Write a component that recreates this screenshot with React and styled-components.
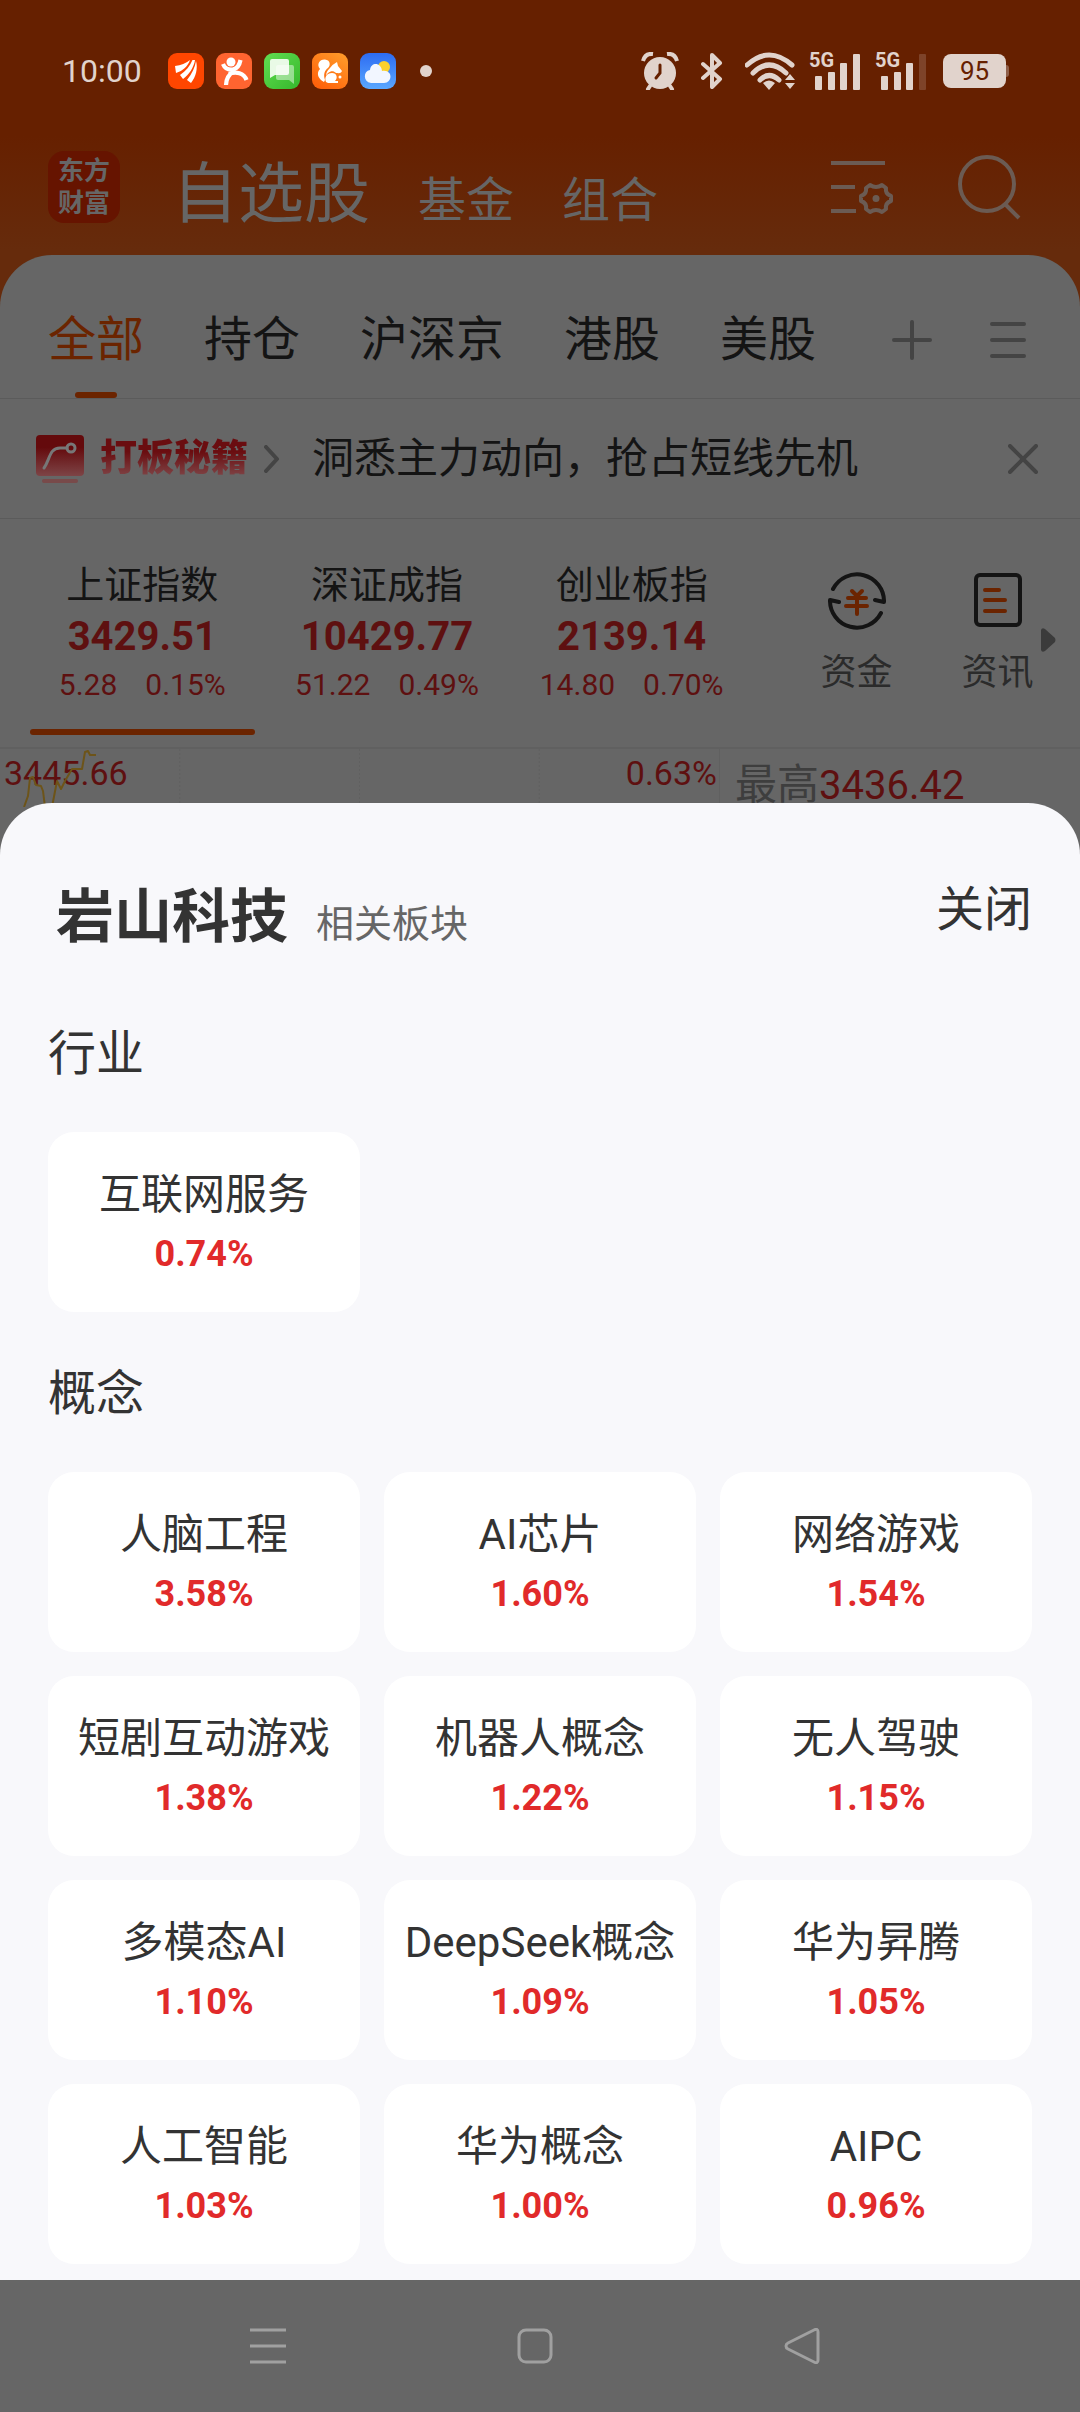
import React from "react";
import styled, { createGlobalStyle } from "styled-components";

const color = {
  scrim: "#666666",
  cream: "#e1d3cc",
  brand: "#662000",
  ink: "#141414",
  dimRed: "#5e1010",
  line: "#5b5b5b",
  icon: "#444444",
  sheet: "#f8f8fb",
  text: "#333333",
  red: "#e12a2a",
};

const GlobalStyle = createGlobalStyle`
  *, *::before, *::after { box-sizing: border-box; }
  body {
    margin: 0;
    background: ${color.scrim};
    font-family: Roboto, "Noto Sans CJK SC", sans-serif;
  }
  h1, h2, p, ul { margin: 0; padding: 0; font-weight: 400; }
  ul { list-style: none; }
  button { margin: 0; padding: 0; border: 0; background: none; color: inherit; font: inherit; cursor: pointer; }
  svg { display: block; flex: none; }
`;

const Screen = styled.div`
  min-height: 100vh;
  display: flex;
  flex-direction: column;
  background: linear-gradient(${color.brand} 0, ${color.brand} 136px, #662b0c 250px);
`;

const StatusBar = styled.div`
  height: 142px;
  padding: 0 74px 0 62px;
  display: flex;
  align-items: center;
  justify-content: space-between;
  color: ${color.cream};
`;

const StatusGroup = styled.div`
  display: flex;
  align-items: center;
  gap: ${(p) => p.$gap}px;
`;

const Time = styled.time`
  width: 94px;
  font-size: 32px;
  line-height: 48px;
`;

const Dot = styled.span`
  width: 12px;
  height: 12px;
  margin-left: 12px;
  border-radius: 50%;
  background: ${color.cream};
`;

const Signal = styled.span`
  position: relative;
  display: block;
  width: 52px;
`;

const SignalLabel = styled.span`
  position: absolute;
  left: 0;
  top: -2px;
  font-size: 20px;
  line-height: 20px;
  font-weight: 700;
`;

const Battery = styled.span`
  position: relative;
  width: 63px;
  height: 34px;
  margin-left: 2px;
  border-radius: 8px;
  background: ${color.cream};
  color: ${color.brand};
  font-size: 26px;
  line-height: 34px;
  text-align: center;

  &::after {
    content: "";
    position: absolute;
    left: 100%;
    top: 11px;
    width: 3px;
    height: 12px;
    border-radius: 0 3px 3px 0;
    background: #8f5f4a;
  }
`;

const Header = styled.header`
  display: flex;
  align-items: center;
  padding: 9px 58px 32px 48px;
  color: ${color.scrim};
`;

const Logo = styled.div`
  width: 72px;
  height: 72px;
  display: grid;
  align-content: center;
  justify-content: center;
  border-radius: 16px;
  background: #661400;
  font-size: 26px;
  font-weight: 700;
  line-height: 32px;
`;

const HeaderNav = styled.nav`
  flex: 1;
  height: 72px;
  padding: 8px 0 0 52px;
  display: flex;
  align-items: baseline;
  gap: 48px;
`;

const NavButton = styled.button`
  font-size: ${(p) => (p.$main ? 66 : 48)}px;
  line-height: 72px;
`;

const HeaderTools = styled.div`
  display: flex;
  align-items: center;
  gap: 64px;
  color: #6b5b53;
`;

const Panel = styled.main`
  border-radius: 52px 52px 0 0;
  background: ${color.scrim};
  color: ${color.ink};
`;

const TabRow = styled.div`
  display: flex;
  align-items: center;
  justify-content: space-between;
  height: 144px;
  padding: 0 54px 0 48px;
  border-bottom: 1px solid ${color.line};
`;

const Tabs = styled.div`
  display: flex;
  gap: 60px;
`;

const Tab = styled.button`
  position: relative;
  height: 143px;
  padding-top: 26px;
  font-size: 48px;
  line-height: 116px;
  color: ${(p) => (p["aria-selected"] ? "#6b2400" : color.ink)};

  &::after {
    content: "";
    position: absolute;
    left: calc(50% - 21px);
    bottom: 0;
    width: 42px;
    height: 6px;
    border-radius: 3px;
    background: ${(p) => (p["aria-selected"] ? "#6b2400" : "transparent")};
  }
`;

const TabTools = styled.div`
  display: flex;
  gap: 58px;
  padding-top: 26px;
  color: ${color.icon};
`;

const NewsRow = styled.div`
  display: flex;
  align-items: center;
  height: 120px;
  padding: 0 42px 0 36px;
  border-bottom: 1px solid ${color.line};
  color: ${color.icon};
`;

const NewsBrand = styled.span`
  margin: 0 16px 0 16px;
  font-size: 37px;
  line-height: 48px;
  font-weight: 900;
  color: transparent;
  background: linear-gradient(#6a0d10 35%, #80484a 90%);
  background-clip: text;
`;

const NewsText = styled.a`
  flex: 1;
  margin-left: 32px;
  font-size: 42px;
  line-height: 60px;
  color: ${color.ink};
  text-decoration: none;
`;

const MarketRow = styled.div`
  position: relative;
  display: grid;
  grid-template-columns: repeat(3, 1fr) 314px;
  height: 228px;
  padding: 0 12px 0 20px;
`;

const IndexCard = styled.button`
  position: relative;
  display: flex;
  flex-direction: column;
  align-items: center;
  padding-top: 38px;

  &::after {
    content: "";
    position: absolute;
    left: 10px;
    right: 10px;
    top: 210px;
    height: 6px;
    border-radius: 3px;
    background: ${(p) => (p.$active ? "#6b2400" : "transparent")};
  }
`;

const IndexName = styled.span`
  font-size: 38px;
  line-height: 56px;
`;

const IndexValue = styled.span`
  font-size: 40px;
  line-height: 48px;
  font-weight: 700;
  color: ${color.dimRed};
`;

const IndexChange = styled.span`
  display: flex;
  gap: 28px;
  font-size: 30px;
  line-height: 48px;
  color: ${color.dimRed};
`;

const Shortcuts = styled.div`
  display: grid;
  grid-template-columns: 1fr 1fr;
  padding-left: 32px;
`;

const Shortcut = styled.button`
  display: flex;
  flex-direction: column;
  align-items: center;
  gap: 18px;
  padding-top: 52px;
  font-size: 36px;
  line-height: 48px;
  color: #2b2b2b;
`;

const More = styled.span`
  position: absolute;
  right: 24px;
  top: 108px;
`;

const ChartRow = styled.div`
  display: grid;
  grid-template-columns: 2fr 1fr;
  height: 116px;
  border-top: 2px solid #606060;
`;

const ChartPane = styled.div`
  position: relative;
  display: flex;
  justify-content: space-between;
  padding: 0 2px 0 4px;
  border-right: 1px solid #606060;
  font-size: 34px;
  line-height: 48px;
  color: ${color.dimRed};
`;

const ChartLine = styled.svg`
  position: absolute;
  left: 0;
  top: 0;
`;

const HighPane = styled.p`
  padding-left: 15px;
  font-size: 42px;
  line-height: 72px;
  color: #3e3e3e;
`;

const HighValue = styled.span`
  font-size: 40px;
  color: ${color.dimRed};
`;

const Sheet = styled.section`
  position: relative;
  flex: 1;
  margin-top: -60px;
  padding: 66px 48px 16px;
  border-radius: 52px 52px 0 0;
  background: ${color.sheet};
  color: ${color.text};
`;

const SheetHead = styled.div`
  display: flex;
  align-items: baseline;
  gap: 28px;
  padding-left: 8px;
`;

const SheetTitle = styled.h1`
  font-size: 58px;
  line-height: 96px;
  font-weight: 700;
`;

const SheetNote = styled.span`
  flex: 1;
  font-size: 38px;
  line-height: 48px;
  color: #666666;
`;

const CloseButton = styled.button`
  align-self: flex-start;
  font-size: 48px;
  line-height: 82px;
`;

const GroupTitle = styled.h2`
  padding: ${(p) => p.$top}px 0 48px;
  font-size: 48px;
  line-height: 60px;
`;

const CardGrid = styled.ul`
  display: grid;
  grid-template-columns: repeat(3, 1fr);
  gap: 24px;
`;

const Card = styled.button`
  display: flex;
  flex-direction: column;
  align-items: center;
  width: 100%;
  height: 180px;
  padding-top: 32px;
  border-radius: 26px;
  background: #ffffff;
`;

const CardName = styled.span`
  font-size: 42px;
  line-height: 62px;
`;

const CardChange = styled.span`
  font-size: 36px;
  line-height: 56px;
  font-weight: 700;
  color: ${color.red};
`;

const SystemNav = styled.nav`
  display: grid;
  grid-template-columns: repeat(3, 1fr);
  height: 132px;
  padding: 0 144px 0 134px;
  background: ${color.scrim};
`;

const SystemKey = styled.button`
  display: grid;
  place-items: center;
`;

const AppIcons = () => (
  <>
    <svg width="36" height="36" viewBox="0 0 36 36">
      <rect width="36" height="36" rx="9" fill="#ff4600" />
      <path fill="#fff" d="M7 13Q16 12 22 7C20 13 15 18 8 20ZM12 22C18 18 22 13 24.500 7L27 7C26 14 21 22 15 26ZM19 27C24 21 27 14 28 8 30 15 28 24 23 30Z" />
    </svg>
    <svg width="36" height="36" viewBox="0 0 36 36">
      <rect width="36" height="36" rx="9" fill="#ff6430" />
      <circle cx="15" cy="9" r="4.500" fill="#fff" />
      <path d="M7 11C9 16 13 17 17 16.500Q23 15 24.500 7M19 17C13 21 10 26 10 32M13 21C20 18 28 20 30.500 27" fill="none" stroke="#fff" strokeWidth="4.200" />
    </svg>
    <svg width="36" height="36" viewBox="0 0 36 36">
      <defs><linearGradient id="msg" x2="1" y2="1"><stop stopColor="#62dd51" /><stop offset="1" stopColor="#35b82c" /></linearGradient></defs>
      <rect width="36" height="36" rx="9" fill="url(#msg)" />
      <path d="M8 6H23Q25 6 25 8V20Q25 22 23 22H11L6 25V8Q6 6 8 6Z" fill="#e9fae6" />
      <path d="M14 12H28Q30 12 30 14V31L25 27H14Q12 27 12 25V14Q12 12 14 12Z" fill="#fff" opacity=".45" />
    </svg>
    <svg width="36" height="36" viewBox="0 0 36 36">
      <defs><linearGradient id="squirrel" x1="1" x2=".3" y2="1"><stop stopColor="#ff9f2c" /><stop offset="1" stopColor="#ff620b" /></linearGradient></defs>
      <rect width="36" height="36" rx="9" fill="url(#squirrel)" />
      <path fill="#fff" d="M12 29C6 26 4 20 8 16 4 11 8 6 13 6.500 18 7 19 12 16 15 13 17 11 21 13 27ZM18 15Q21 11 25 9L26 13 30 18C29 21 26 20 24 20 20 16 15 20 14 23 14 20 15 18 18 15Z" />
      <path fill="#fff" d="M14 29C12 24 15 20 20 20 25 20 26 25 23 28H26V30H16Z" />
      <circle cx="28" cy="24" r="1.500" fill="#fff" />
    </svg>
    <svg width="36" height="36" viewBox="0 0 36 36">
      <defs><linearGradient id="sky" x2="0" y2="1"><stop stopColor="#2d6cf2" /><stop offset="1" stopColor="#5aa7ff" /></linearGradient></defs>
      <rect width="36" height="36" rx="9" fill="url(#sky)" />
      <circle cx="24" cy="14" r="6" fill="#fbd02c" />
      <path d="M11 30C3 29 3 18 10 17 11 9 21 9 22 18 33 16 33 30 24 30Z" fill="#f2f6ff" />
    </svg>
  </>
);

const Alarm = () => (
  <svg width="38" height="38" viewBox="0 0 38 38" aria-label="闹钟">
    <circle cx="19" cy="21" r="16" fill="currentColor" />
    <path d="M2 9Q4 1 12 2M26 2Q34 1 36 9" fill="none" stroke="currentColor" strokeWidth="4" />
    <path d="M9 34 7 37M29 34 31 37" stroke="currentColor" strokeWidth="4" strokeLinecap="round" />
    <path d="M19 13V21L15 26" fill="none" stroke={color.brand} strokeWidth="3" strokeLinecap="round" />
  </svg>
);

const Bluetooth = () => (
  <svg width="22" height="38" viewBox="0 0 22 38" aria-label="蓝牙">
    <path d="M2 12 19 27 11 35V3L19 11 2 26" fill="none" stroke="currentColor" strokeWidth="4" strokeLinejoin="round" strokeLinecap="round" />
  </svg>
);

const Wifi = () => (
  <svg width="50" height="38" viewBox="0 0 50 38" aria-label="无线网络">
    <path d="M2 13Q24-7 47 13M8 21Q24 5 41 21M15 28Q24 19 34 28" fill="none" stroke="currentColor" strokeWidth="5" strokeLinecap="round" />
    <path d="M18 31Q24 26 30 31L24 38ZM45 22 50 28H40ZM40 31H50L45 37Z" fill="currentColor" />
  </svg>
);

const SignalBars = ({ weak }) => (
  <Signal>
    <svg width="52" height="38" viewBox="0 0 52 38" aria-label="信号">
      <g fill="currentColor">
        <rect x="6" y="24" width="7" height="14" rx="1" />
        <rect x="19" y="20" width="7" height="18" rx="1" />
        <rect x="31" y="11" width="7" height="27" rx="1" />
        <rect x="44" y="2" width="7" height="36" rx="1" opacity={weak ? 0.2 : 1} />
      </g>
    </svg>
    <SignalLabel>5G</SignalLabel>
  </Signal>
);

const Stroke = ({ w, h, d, width = 4 }) => (
  <svg width={w} height={h} viewBox={`0 0 ${w} ${h}`} fill="none" stroke="currentColor" strokeWidth={width} strokeLinecap="round" strokeLinejoin="round" aria-hidden="true">
    <path d={d} />
  </svg>
);

const FilterIcon = () => (
  <svg width="63" height="58" viewBox="0 0 63 58" fill="none" stroke="currentColor" strokeWidth="4" aria-hidden="true">
    <path d="M0 5H54M0 29H24M0 53H25" />
    <path d="M39 27Q45 31 51 27L55 30Q54 36 60 38V43Q54 45 55 51L51 54Q45 50 39 54L35 51Q36 45 30 43V38Q36 36 35 30Z" strokeLinejoin="round" />
    <circle cx="45" cy="40.500" r="3.500" fill="currentColor" stroke="none" />
  </svg>
);

const SearchIcon = () => (
  <svg width="64" height="66" viewBox="0 0 64 66" fill="none" stroke="currentColor" strokeWidth="4" aria-hidden="true">
    <circle cx="29" cy="30" r="27" />
    <path d="M47 50 61 64" />
  </svg>
);

const NewsIcon = () => (
  <svg width="48" height="50" viewBox="0 0 48 50" aria-hidden="true">
    <defs><linearGradient id="news" x2="0" y2="1"><stop offset=".3" stopColor="#640a0c" /><stop offset="1" stopColor="#7d4446" /></linearGradient></defs>
    <rect y="1" width="48" height="41" rx="4" fill="url(#news)" />
    <path d="M8 34C14 26 13 14 24 14H31" fill="none" stroke="#777" strokeWidth="3" strokeLinecap="round" />
    <circle cx="35" cy="14" r="4" fill="none" stroke="#777" strokeWidth="3" />
    <rect x="6" y="45" width="36" height="4" rx="2" fill="#784a4a" />
  </svg>
);

const FundsIcon = () => (
  <svg width="58" height="60" viewBox="0 0 58 60" fill="none" strokeWidth="4" strokeLinecap="round" strokeLinejoin="round" aria-hidden="true">
    <path d="M5 18A27 27 0 0 1 56 31L47 29M53 42A27 27 0 0 1 2 29L11 31" stroke={color.ink} />
    <path d="M24 20 29 25 34 20M20 27H38M18 35H39M29 26V43" stroke="#6b2400" />
  </svg>
);

const InfoIcon = () => (
  <svg width="48" height="60" viewBox="0 0 48 60" fill="none" strokeWidth="4" strokeLinecap="round" aria-hidden="true">
    <rect x="2" y="4" width="44" height="50" rx="4" stroke={color.ink} />
    <path d="M11 19H25M11 29H31M11 40H31" stroke="#6b2400" />
  </svg>
);

const indices = [
  { name: "上证指数", value: "3429.51", diff: "5.28", pct: "0.15%", active: true },
  { name: "深证成指", value: "10429.77", diff: "51.22", pct: "0.49%" },
  { name: "创业板指", value: "2139.14", diff: "14.80", pct: "0.70%" },
];

const groups = [
  { title: "行业", top: 59, items: [["互联网服务", "0.74%"]] },
  {
    title: "概念",
    top: 52,
    items: [
      ["人脑工程", "3.58%"], ["AI芯片", "1.60%"], ["网络游戏", "1.54%"],
      ["短剧互动游戏", "1.38%"], ["机器人概念", "1.22%"], ["无人驾驶", "1.15%"],
      ["多模态AI", "1.10%"], ["DeepSeek概念", "1.09%"], ["华为昇腾", "1.05%"],
      ["人工智能", "1.03%"], ["华为概念", "1.00%"], ["AIPC", "0.96%"],
    ],
  },
];

export default function App() {
  return (
    <Screen>
      <GlobalStyle />
      <StatusBar>
        <StatusGroup $gap={12}>
          <Time>10:00</Time>
          <AppIcons />
          <Dot />
        </StatusGroup>
        <StatusGroup $gap={14}>
          <StatusGroup $gap={22}>
            <Alarm />
            <Bluetooth />
            <Wifi />
          </StatusGroup>
          <SignalBars />
          <SignalBars weak />
          <Battery>95</Battery>
        </StatusGroup>
      </StatusBar>

      <Header>
        <Logo><span>东方</span><span>财富</span></Logo>
        <HeaderNav>
          <NavButton $main>自选股</NavButton>
          <NavButton>基金</NavButton>
          <NavButton>组合</NavButton>
        </HeaderNav>
        <HeaderTools>
          <button aria-label="设置"><FilterIcon /></button>
          <button aria-label="搜索"><SearchIcon /></button>
        </HeaderTools>
      </Header>

      <Panel>
        <TabRow>
          <Tabs role="tablist">
            {["全部", "持仓", "沪深京", "港股", "美股"].map((name, i) => (
              <Tab key={name} role="tab" aria-selected={i === 0}>{name}</Tab>
            ))}
          </Tabs>
          <TabTools>
            <button aria-label="添加"><Stroke w={40} h={40} d="M2 20H38M20 2V38" /></button>
            <button aria-label="菜单"><Stroke w={36} h={40} d="M2 4H34M2 20H34M2 36H34" /></button>
          </TabTools>
        </TabRow>

        <NewsRow>
          <NewsIcon />
          <NewsBrand>打板秘籍</NewsBrand>
          <Stroke w={16} h={28} d="M2 2 13 14 2 26" />
          <NewsText href="#news">洞悉主力动向，抢占短线先机</NewsText>
          <button aria-label="关闭提示"><Stroke w={30} h={30} d="M2 2 28 28M28 2 2 28" /></button>
        </NewsRow>

        <MarketRow>
          {indices.map((it) => (
            <IndexCard key={it.name} $active={it.active}>
              <IndexName>{it.name}</IndexName>
              <IndexValue>{it.value}</IndexValue>
              <IndexChange><span>{it.diff}</span><span>{it.pct}</span></IndexChange>
            </IndexCard>
          ))}
          <Shortcuts>
            <Shortcut><FundsIcon />资金</Shortcut>
            <Shortcut><InfoIcon />资讯</Shortcut>
          </Shortcuts>
          <More>
            <svg width="16" height="26" viewBox="0 0 16 26" aria-hidden="true">
              <path d="M1 3Q2 0 5 2L15 11Q16 13 15 15L5 24Q2 26 1 23Z" fill="#3b3b3b" />
            </svg>
          </More>
        </MarketRow>

        <ChartRow>
          <ChartPane>
            <span>3445.66</span>
            <span>0.63%</span>
            <ChartLine width="100%" height="58" aria-hidden="true">
              <g stroke="#606060" strokeDasharray="2 2">
                <line x1="25%" x2="25%" y2="58" />
                <line x1="50%" x2="50%" y2="58" />
                <line x1="75%" x2="75%" y2="58" />
              </g>
              <path d="M24 58 28 47 30 29 33 28 36 36 41 37 43 42 45 58M52 58 57 32 61 40 65 32 72 20 82 20 85 3 88 2 90 6 96 6" fill="none" stroke="#6d5419" strokeWidth="2" strokeLinejoin="round" />
            </ChartLine>
          </ChartPane>
          <HighPane>最高<HighValue>3436.42</HighValue></HighPane>
        </ChartRow>
      </Panel>

      <Sheet aria-label="相关板块">
        <SheetHead>
          <SheetTitle>岩山科技</SheetTitle>
          <SheetNote>相关板块</SheetNote>
          <CloseButton>关闭</CloseButton>
        </SheetHead>
        {groups.map((group) => (
          <section key={group.title}>
            <GroupTitle $top={group.top}>{group.title}</GroupTitle>
            <CardGrid>
              {group.items.map(([name, pct]) => (
                <li key={name}>
                  <Card>
                    <CardName>{name}</CardName>
                    <CardChange>{pct}</CardChange>
                  </Card>
                </li>
              ))}
            </CardGrid>
          </section>
        ))}
      </Sheet>

      <SystemNav aria-label="系统导航">
        <SystemKey aria-label="最近任务">
          <svg width="36" height="36" viewBox="0 0 36 36" stroke="#a0a0a0" strokeWidth="3"><path d="M0 2H36M0 18H36M0 34H36" /></svg>
        </SystemKey>
        <SystemKey aria-label="主页">
          <svg width="36" height="36" viewBox="0 0 36 36" fill="none" stroke="#a0a0a0" strokeWidth="3"><rect x="2" y="2" width="32" height="32" rx="7" /></svg>
        </SystemKey>
        <SystemKey aria-label="返回">
          <svg width="36" height="36" viewBox="0 0 36 36" fill="none" stroke="#a0a0a0" strokeWidth="3" strokeLinejoin="round"><path d="M2 18Q2 16 4 15L30 2Q34 0 34 4V32Q34 36 30 34L4 21Q2 20 2 18Z" /></svg>
        </SystemKey>
      </SystemNav>
    </Screen>
  );
}
